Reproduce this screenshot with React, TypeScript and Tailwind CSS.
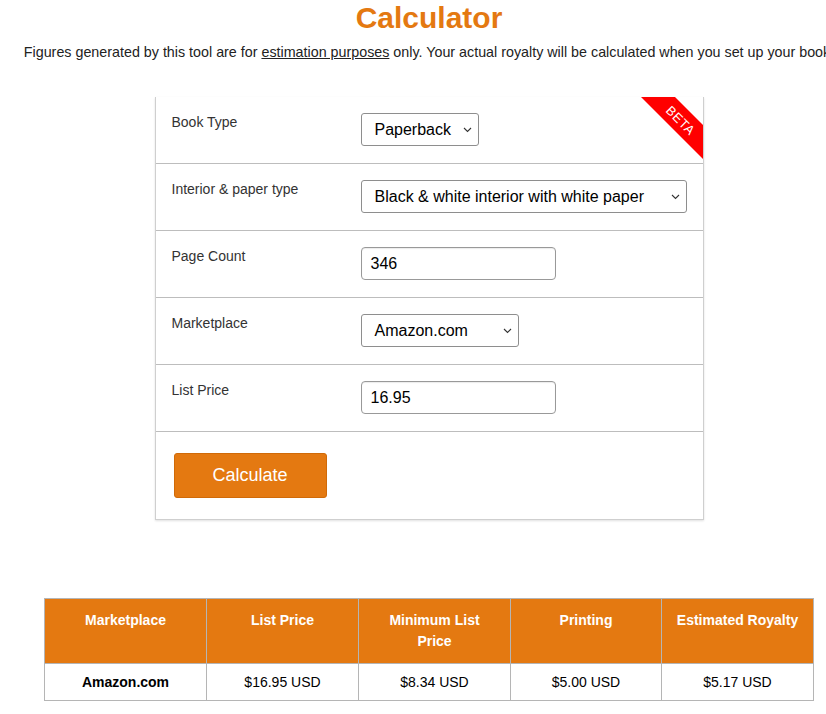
import React from "react";

const Chevron = () => (
  <svg width="9" height="6" viewBox="0 0 9 6" className="shrink-0">
    <polyline points="1,1 4.5,4.5 8,1" fill="none" stroke="#333" strokeWidth="1.1" />
  </svg>
);

function FakeSelect({ value, width }: { value: string; width: string }) {
  return (
    <div
      className={`${width} h-[33px] flex items-center justify-between pl-[13px] pr-[6px] border border-[#8e8e8e] rounded-[3px] bg-white text-[16px] text-black`}
    >
      <span>{value}</span>
      <Chevron />
    </div>
  );
}

function FakeInput({ value }: { value: string }) {
  return (
    <div className="w-[195px] h-[33px] flex items-center pl-[9px] border border-[#999] rounded-[4px] bg-white text-[16px] text-black shadow-[inset_0_1px_1px_rgba(0,0,0,0.08)]">
      {value}
    </div>
  );
}

function Row({ label, children }: { label: string; children: React.ReactNode }) {
  return (
    <div className="flex border-b border-[#bdbdbd] pl-4 pt-4 pb-[17px]">
      <div className="w-[189px] text-[14px] leading-[20px] text-[#333] -mt-[1px]">{label}</div>
      <div>{children}</div>
    </div>
  );
}

export default function App() {
  const headers = ["Marketplace", "List Price", "Minimum List Price", "Printing", "Estimated Royalty"];
  const widths = ["w-[162px]", "w-[152px]", "w-[152px]", "w-[151px]", "w-[152px]"];
  const values = ["Amazon.com", "$16.95 USD", "$8.34 USD", "$5.00 USD", "$5.17 USD"];
  return (
    <div className="w-full overflow-hidden bg-white min-h-[714px]" style={{ fontFamily: '"Liberation Sans", Arial, sans-serif' }}>
      <div className="w-[858px] text-center">
        <h1 className="text-[30px] leading-[36px] font-bold text-[#E47911]">Calculator</h1>
        <p className="mt-[6px] text-[14.3px] leading-[20px] text-[#222] whitespace-nowrap">
          Figures generated by this tool are for <span className="underline">estimation purposes</span> only. Your actual
          royalty will be calculated when you set up your book.
        </p>

        <div className="relative w-[549px] mx-auto mt-[35px] text-left border-x border-b border-[#cfcfcf] shadow-[0_1px_2px_rgba(0,0,0,0.12)] bg-white">
          <Row label="Book Type">
            <FakeSelect value="Paperback" width="w-[118px]" />
          </Row>
          <Row label="Interior & paper type">
            <FakeSelect value="Black & white interior with white paper" width="w-[326px]" />
          </Row>
          <Row label="Page Count">
            <FakeInput value="346" />
          </Row>
          <Row label="Marketplace">
            <FakeSelect value="Amazon.com" width="w-[158px]" />
          </Row>
          <Row label="List Price">
            <FakeInput value="16.95" />
          </Row>
          <div className="pl-[18px] pt-[21px] pb-[21px]">
            <button className="w-[153px] h-[45px] bg-[#E47911] border border-[#d06a08] rounded-[3px] text-white text-[18px]">
              Calculate
            </button>
          </div>

          <div className="absolute top-0 right-0 w-[62px] h-[67px] overflow-hidden">
            <div className="absolute left-[-14px] top-[11px] w-[108px] h-[24px] bg-[#ff0000] rotate-45 flex items-center justify-center text-white text-[13px] leading-none tracking-[0.5px]">
              BETA
            </div>
          </div>
        </div>

        <table className="mx-auto mt-[78px] border-collapse text-[14px]">
          <thead>
            <tr>
              {headers.map((h, i) => (
                <th
                  key={h}
                  className={`${widths[i]} h-[65px] align-top pt-[11px] px-3 bg-[#E47911] text-white font-bold leading-[21px] border border-[#b5b5b5]`}
                >
                  {h}
                </th>
              ))}
            </tr>
          </thead>
          <tbody>
            <tr>
              {values.map((v, i) => (
                <td
                  key={v}
                  className={`h-[37px] text-center leading-[21px] text-black border border-[#b5b5b5] ${i === 0 ? "font-bold" : ""}`}
                >
                  {v}
                </td>
              ))}
            </tr>
          </tbody>
        </table>
      </div>
    </div>
  );
}
